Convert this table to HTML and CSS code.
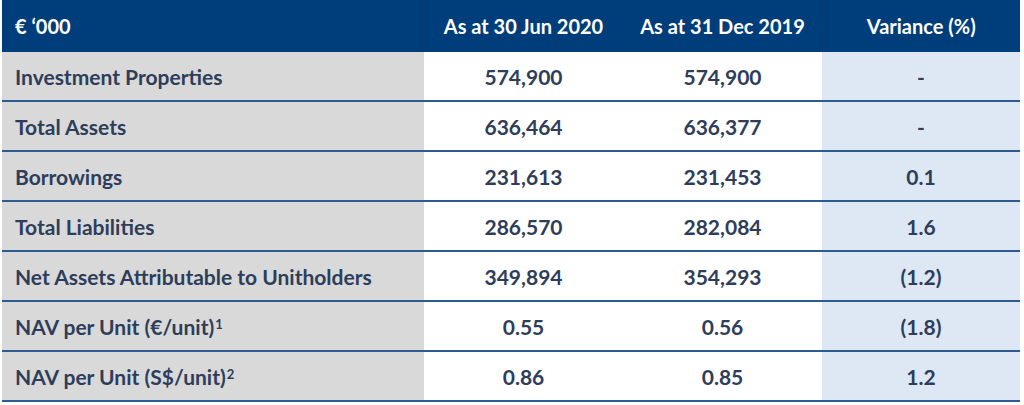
FILE: index.html
```html
<!DOCTYPE html>
<html>
<head>
<meta charset="utf-8">
<link rel="stylesheet" href="styles.css">
</head>
<body>
<table class="fin">
  <colgroup>
    <col class="c-label"><col class="c-num"><col class="c-num"><col class="c-var">
  </colgroup>
  <thead>
    <tr>
      <th class="label">€ ‘000</th>
      <th>As at 30 Jun 2020</th>
      <th>As at 31 Dec 2019</th>
      <th>Variance (%)</th>
    </tr>
  </thead>
  <tbody>
    <tr><td class="label">Investment Properties</td><td>574,900</td><td>574,900</td><td class="var">-</td></tr>
    <tr><td class="label">Total Assets</td><td>636,464</td><td>636,377</td><td class="var">-</td></tr>
    <tr><td class="label">Borrowings</td><td>231,613</td><td>231,453</td><td class="var">0.1</td></tr>
    <tr><td class="label">Total Liabilities</td><td>286,570</td><td>282,084</td><td class="var">1.6</td></tr>
    <tr><td class="label">Net Assets Attributable to Unitholders</td><td>349,894</td><td>354,293</td><td class="var">(1.2)</td></tr>
    <tr><td class="label">NAV per Unit (€/unit)<sup>1</sup></td><td>0.55</td><td>0.56</td><td class="var">(1.8)</td></tr>
    <tr><td class="label">NAV per Unit (S$/unit)<sup>2</sup></td><td>0.86</td><td>0.85</td><td class="var">1.2</td></tr>
  </tbody>
</table>
</body>
</html>
```

FILE: styles.css
```css
html, body {
  margin: 0;
  padding: 0;
  background: #ffffff;
}
body {
  padding: 0 4px 0 2px;
  font-family: "Lato", "Open Sans", "Liberation Sans", sans-serif;
}
.fin {
  width: 1018px;
  border-collapse: collapse;
  table-layout: fixed;
  font-weight: 700;
  font-size: 21px;
  color: #2d3d5a;
}
.c-label { width: 422px; }
.c-num { width: 199px; }
.c-var { width: 198px; }
.fin th {
  background: #003d7b;
  color: #ffffff;
  height: 52px;
  padding: 0;
  font-size: 20px;
  font-weight: 700;
  text-align: center;
  border-left: 1px solid #0a3a6e;
}
.fin th:first-child { border-left: none; }
.fin th.label {
  text-align: left;
  padding-left: 13px;
}
.fin td {
  height: 48px;
  padding: 0;
  text-align: center;
  background: #ffffff;
  border-bottom: 2px solid #2f5b93;
}
.fin td.label {
  text-align: left;
  padding-left: 13px;
  background: #d9d9d9;
}
.fin td.var {
  background: #dde8f4;
}
.fin sup {
  font-size: 13px;
  line-height: 0;
  vertical-align: 6px;
  margin-left: 1px;
}
```
